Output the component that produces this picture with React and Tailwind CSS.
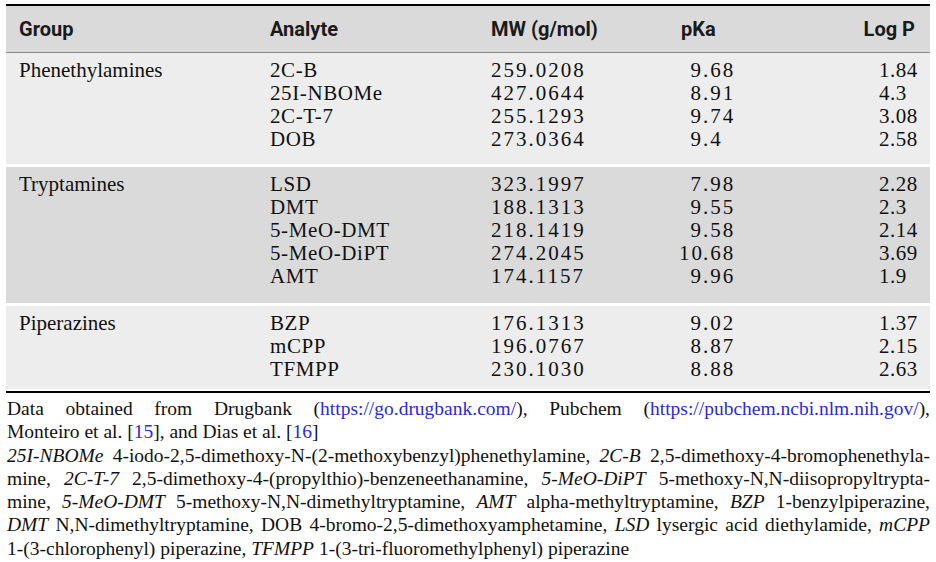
import React from 'react';

// table data
const groups = [
  {
    name: 'Phenethylamines',
    bg: 'bg-[#ededed]',
    pad: 'pb-[13px]',
    rows: [
      ['2C-B', '259.0208', '9.68', '1.84'],
      ['25I-NBOMe', '427.0644', '8.91', '4.3'],
      ['2C-T-7', '255.1293', '9.74', '3.08'],
      ['DOB', '273.0364', '9.4', '2.58'],
    ],
  },
  {
    name: 'Tryptamines',
    bg: 'bg-[#dadada]',
    pad: 'pb-[15px]',
    rows: [
      ['LSD', '323.1997', '7.98', '2.28'],
      ['DMT', '188.1313', '9.55', '2.3'],
      ['5-MeO-DMT', '218.1419', '9.58', '2.14'],
      ['5-MeO-DiPT', '274.2045', '10.68', '3.69'],
      ['AMT', '174.1157', '9.96', '1.9'],
    ],
  },
  {
    name: 'Piperazines',
    bg: 'bg-[#ededed]',
    pad: 'pb-[8px]',
    rows: [
      ['BZP', '176.1313', '9.02', '1.37'],
      ['mCPP', '196.0767', '8.87', '2.15'],
      ['TFMPP', '230.1030', '8.88', '2.63'],
    ],
  },
];

// decimal-aligned pKa
function Pka({ value }) {
  const [int, frac] = value.split('.');
  return (
    <span>
      <span className="inline-block w-[24px] text-right">{int}</span>
      {frac ? '.' + frac : ''}
    </span>
  );
}

function Band({ group, first }) {
  return (
    <div
      className={`${group.bg} ${group.pad} ${first ? '' : 'mt-[3px]'} pt-[6px] pl-[13px] grid grid-cols-[251px_221px_188px_200px_1fr] leading-[23px]`}
    >
      {group.rows.map((r, i) => (
        <React.Fragment key={r[0]}>
          <div>{i === 0 ? group.name : ''}</div>
          <div className="tracking-[0.6px]">{r[0]}</div>
          <div className="tracking-[2px]">{r[1]}</div>
          <div className="tracking-[2px]">
            <Pka value={r[2]} />
          </div>
          <div className="tracking-[0.5px]">{r[3]}</div>
        </React.Fragment>
      ))}
    </div>
  );
}

const Link = ({ children }) => <span className="text-[#2a2ad8]">{children}</span>;

export default function App() {
  return (
    <div className="w-[936px] h-[562px] bg-white pt-[4px] overflow-hidden text-[#111] font-['Liberation_Serif',serif] text-[21px]">
      <div className="ml-[6px] w-[924px]">
        <div className="border-t-2 border-black bg-[#dadada] border-b border-b-[#8a8a8a] h-[49px] pl-[13px] grid grid-cols-[251px_221px_190px_1fr_auto] items-center font-['Roboto',sans-serif] font-bold text-[20px] text-[#1a1a1a]">
          <div>Group</div>
          <div>Analyte</div>
          <div>MW (g/mol)</div>
          <div>pKa</div>
          <div className="pr-[15px]">Log P</div>
        </div>

        {groups.map((g, i) => (
          <Band key={g.name} group={g} first={i === 0} />
        ))}

        <div className="mt-[2px] border-t-2 border-black" />

        <div className="pt-[4px] pl-[1px] text-[19.5px] leading-[23.3px]">
          <div className="text-justify [text-align-last:justify]">
            Data obtained from Drugbank (<Link>https://go.drugbank.com/</Link>), Pubchem (
            <Link>https://pubchem.ncbi.nlm.nih.gov/</Link>),
          </div>
          <div>
            Monteiro et al. [<Link>15</Link>], and Dias et al. [<Link>16</Link>]
          </div>
          <div className="text-justify [text-align-last:justify]">
            <i>25I-NBOMe</i> 4-iodo-2,5-dimethoxy-N-(2-methoxybenzyl)phenethylamine, <i>2C-B</i>{' '}
            2,5-dimethoxy-4-bromophenethyla-
          </div>
          <div className="text-justify [text-align-last:justify]">
            mine, <i>2C-T-7</i> 2,5-dimethoxy-4-(propylthio)-benzeneethanamine, <i>5-MeO-DiPT</i>{' '}
            5-methoxy-N,N-diisopropyltrypta-
          </div>
          <div className="text-justify [text-align-last:justify]">
            mine, <i>5-MeO-DMT</i> 5-methoxy-N,N-dimethyltryptamine, <i>AMT</i> alpha-methyltryptamine,{' '}
            <i>BZP</i> 1-benzylpiperazine,
          </div>
          <div className="text-justify [text-align-last:justify]">
            <i>DMT</i> N,N-dimethyltryptamine, DOB 4-bromo-2,5-dimethoxyamphetamine, <i>LSD</i> lysergic
            acid diethylamide, <i>mCPP</i>
          </div>
          <div>
            1-(3-chlorophenyl) piperazine, <i>TFMPP</i> 1-(3-tri-fluoromethylphenyl) piperazine
          </div>
        </div>
      </div>
    </div>
  );
}
